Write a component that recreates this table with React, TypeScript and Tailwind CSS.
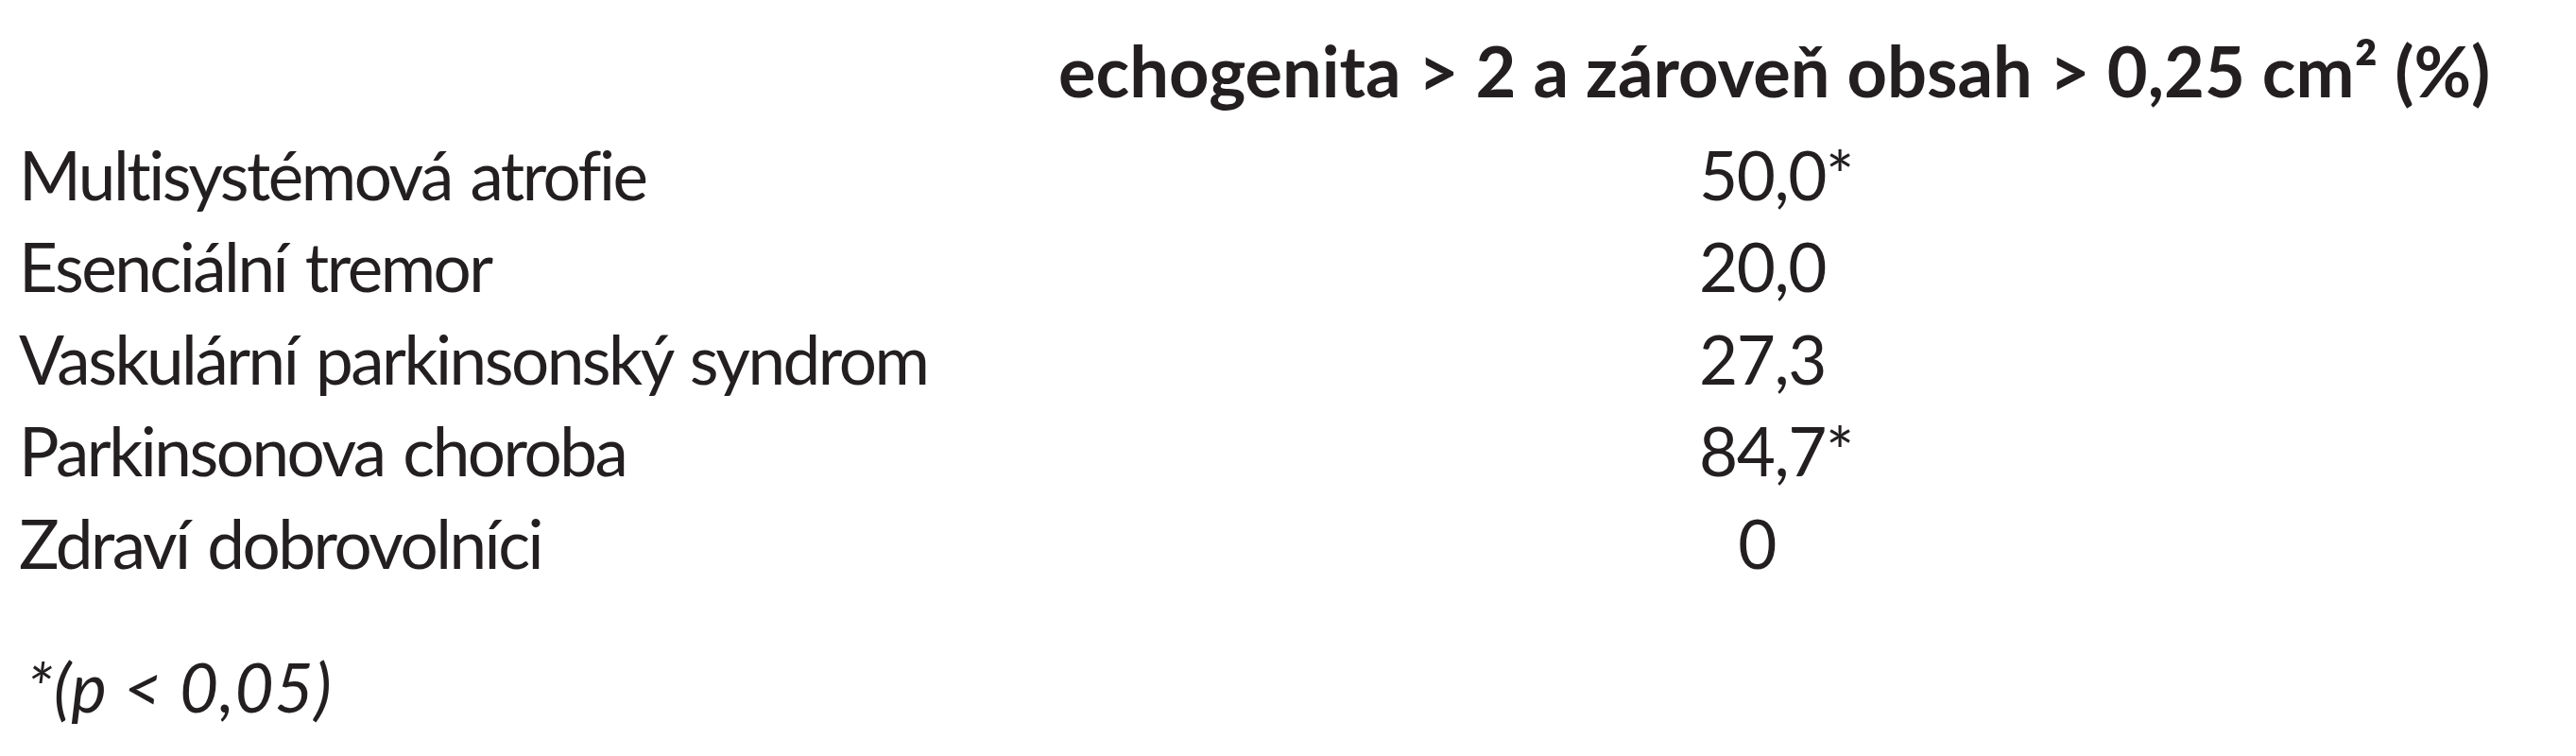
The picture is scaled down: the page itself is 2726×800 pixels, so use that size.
const rows: { label: string; value: string; pad?: boolean }[] = [
  { label: 'Multisystémová atrofie', value: '50,0*' },
  { label: 'Esenciální tremor', value: '20,0' },
  { label: 'Vaskulární parkinsonský syndrom', value: '27,3' },
  { label: 'Parkinsonova choroba', value: '84,7*' },
  { label: 'Zdraví dobrovolníci', value: '0', pad: true },
]

export default function App() {
  return (
    <div className="h-[800px] w-[2726px] bg-white pt-[26px] pl-[20px] font-['Lato',sans-serif] text-[71px] leading-[97.5px] text-[#231f20]">
      <div className="grid grid-cols-[1100px_auto]">
        <div />
        <div className="mb-[12px] text-[74px] font-bold tracking-normal">
          echogenita &gt; 2 a zároveň obsah &gt; 0,25 cm² (%)
        </div>
        {rows.map((r) => (
          <div key={r.label} className="contents">
            <div className="tracking-[-0.035em] [word-spacing:4px]">{r.label}</div>
            <div className="pl-[678px] tracking-[-0.02em]">
              {r.pad ? <span className="pl-[1ch]">{r.value}</span> : r.value}
            </div>
          </div>
        ))}
      </div>
      <p className="mt-[55px] pl-[8px] italic tracking-[0.01em]">*(p &lt; 0,05)</p>
    </div>
  )
}
